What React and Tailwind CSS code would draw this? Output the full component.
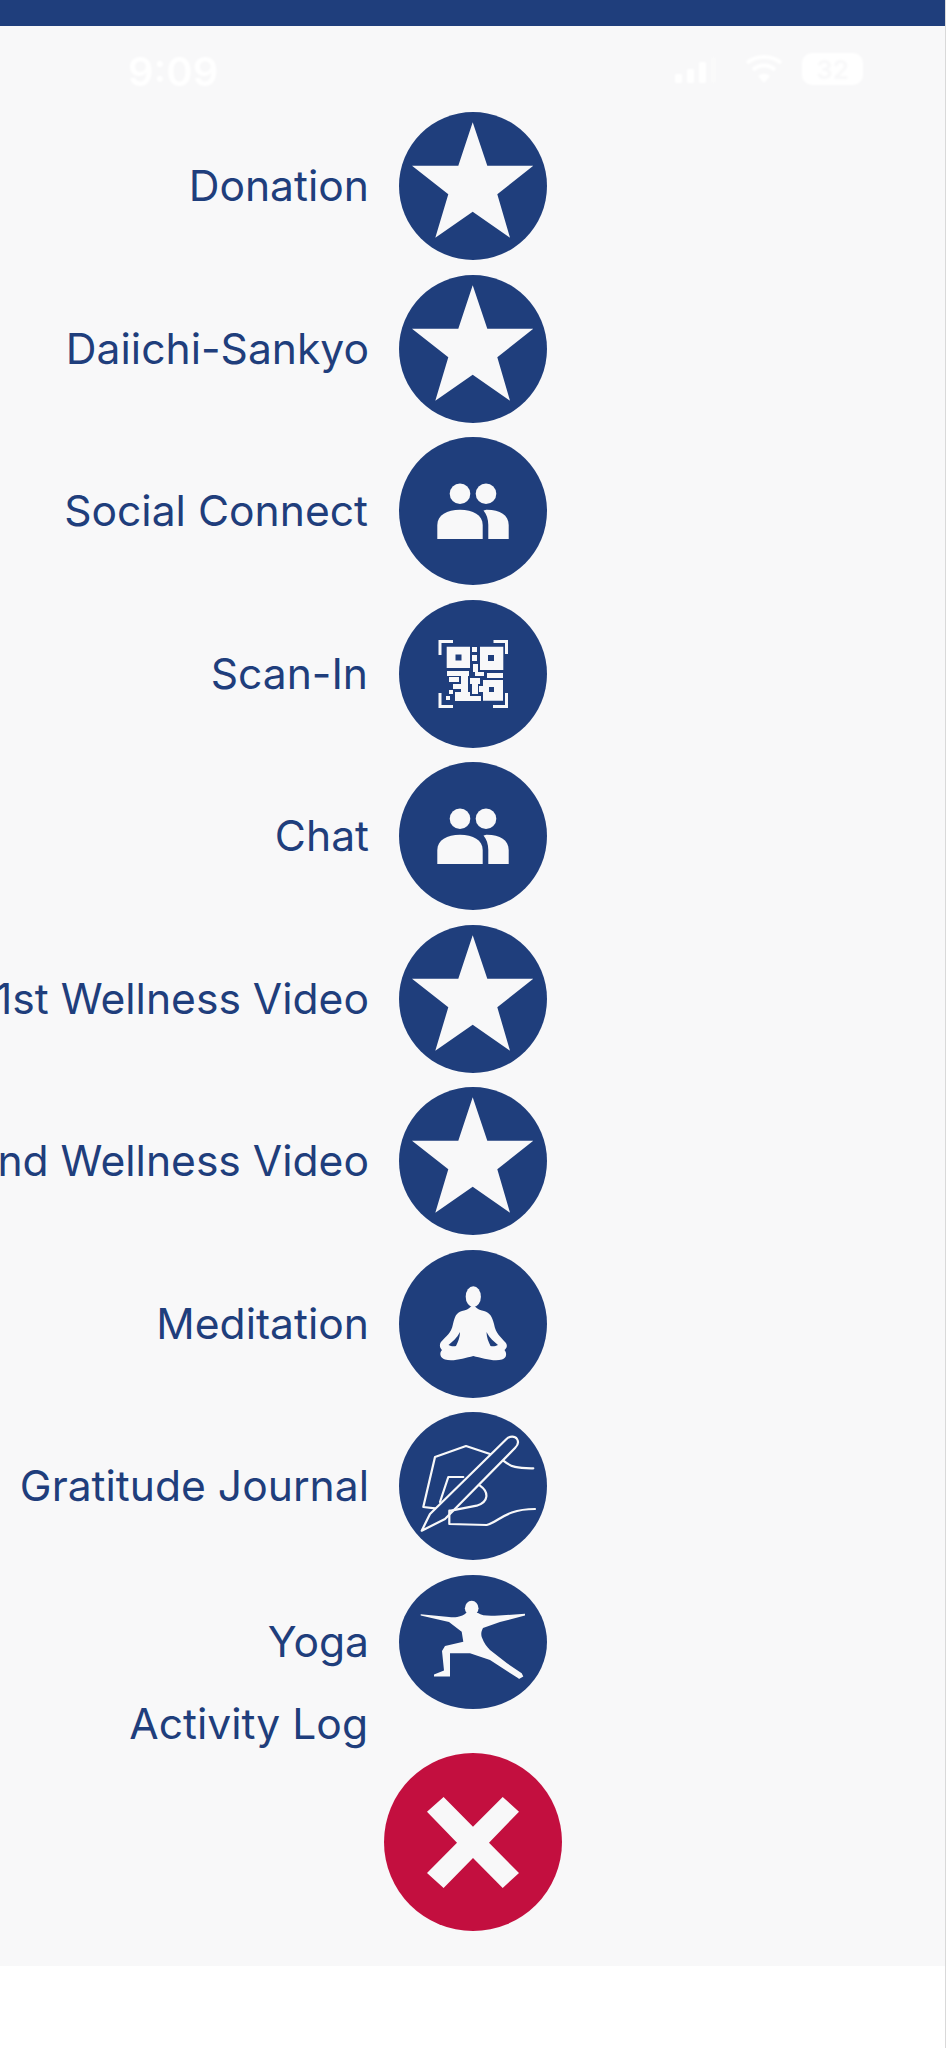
import { useMemo } from "react";

const NAVY = "#1f3e7c";
const PAGE = "#f8f8f9";

function StarIcon() {
    return (
        <polygon
            fill={PAGE}
            points="73.7,10.3 88.3,53.7 134.3,53.7 98.3,82.3 111,125.7 73.7,99.7 36.3,125.7 49.3,82.3 13,53.7 59.3,53.7"
        />
    );
}

function PeopleIcon() {
    return (
        <g fill={PAGE}>
            <circle cx="61" cy="56.7" r="10.3" />
            <circle cx="87" cy="56.7" r="10.3" />
            <path d="M38.3 102V88C38.3 78 48 72.7 61 72.7C74 72.7 83.7 78 83.7 88V102Z" />
            <path d="M89.3 102V88C89.3 82 87.5 77 84.5 73.5C86 73 87 72.7 88 72.7C101 72.7 109.7 78 109.7 88V102Z" />
        </g>
    );
}

function QrIcon() {
    return (
        <g>
            <path
                d="M54 41.5H41V55M94.5 41.5H107.5V54M41 93V106.5H54M94 106.5H107.5V93"
                fill="none"
                stroke={PAGE}
                strokeWidth="3"
            />
            <path
                fill={PAGE}
                fillRule="evenodd"
                d="M47.7 46.7H71V68H47.7ZM56.5 54.5V60.5H62.5V54.5ZM81 46.7H104.3V70H81ZM89 55V61H95V55ZM84 80H104V100.7H84ZM90 87V92H95V87Z"
            />
            <g fill={PAGE}>
                <rect x="73" y="47" width="5" height="5" />
                <rect x="73" y="55" width="5" height="6" />
                <rect x="74" y="64" width="5" height="8" />
                <rect x="48" y="71" width="22" height="5" />
                <rect x="76" y="72" width="9" height="4" />
                <rect x="88" y="73" width="16" height="5" />
                <rect x="50" y="77" width="10" height="5" />
                <rect x="62" y="76" width="7" height="17" />
                <rect x="71" y="78" width="10" height="6" />
                <rect x="54" y="84" width="14" height="5" />
                <rect x="73" y="84" width="6" height="10" />
                <rect x="50" y="90" width="4" height="4" />
                <rect x="47" y="96" width="4" height="4" />
                <rect x="56" y="92" width="15" height="9" />
                <rect x="71" y="96" width="11" height="5" />
                <rect x="80" y="86" width="6" height="6" />
            </g>
        </g>
    );
}

function MeditationIcon() {
    return (
        <g>
            <ellipse cx="74.3" cy="46.7" rx="7.6" ry="10.5" fill={PAGE} />
            <path
                fill={PAGE}
                d="M74 55C70 58 69 60 63 61C57 63 56 66 54 74C52 84 47 86 42 92C40 95 41 98 43 100C40 103 41 108 46 109.5C54 112 66 108 74.3 106C83 108 95 112 103 109.5C108 108 108 103 105.5 100C108 98 109 95 106 92C101 86 97 84 95 74C93 66 91 63 85 61C79 60 78 58 74 55Z"
            />
            <path fill={NAVY} d="M61 82C58 88 53 92 49.5 95C52 96.5 55 96.5 57 96C59 92 61 87 61 82Z" />
            <path fill={NAVY} d="M87.5 82C90.5 88 95.5 92 99 95C96.5 96.5 93.5 96.5 91.5 96C89.5 92 87.5 87 87.5 82Z" />
        </g>
    );
}

function JournalIcon() {
    return (
        <g fill="none" stroke={PAGE} strokeWidth="2.2" strokeLinejoin="round" strokeLinecap="round">
            <path d="M22.7 118.7L31 102L107 27.5C111 23.5 116 24 118 27C120 30 119 33 116 36L46 107Z" />
            <path d="M91 42L67 34L36 45L24.3 95L36 96.3" />
            <path d="M41 90L49.3 65H64.3" />
            <path d="M104.3 48.7C112 55 118 56.5 134.3 56.3" />
            <path d="M81 73.7C90 80 90 90 77.7 93.7L52 98.7H50.3V112L87.7 113C100 110 106 97 136 97" />
        </g>
    );
}

function YogaIcon() {
    return (
        <g fill={PAGE}>
            <ellipse cx="72.7" cy="33.3" rx="6.8" ry="7.5" />
            <path d="M21.7 39.3L50 42C58 43 64 41 67 38L79 38C83 41 90 41 100 40.5L126 38.7L126 40.5L101 47L84 53C82 57 82 59 82.7 62C85 68 88 72 91 75L108 88.3L122.7 98.3L124.3 101.5L120 104L119.3 103.3L91 85L71 78.3H51L51 101.5H35V99.5L45 95.5L43 76L46 71L64.3 66.7L62.7 56.7L50 47L21.7 40.5Z" />
        </g>
    );
}

function Row({ label, nudge, children }) {
    return (
        <div className="flex items-center">
            <div className={`flex w-[399px] justify-end whitespace-nowrap ${nudge ? "pr-[31px]" : "pr-[30px]"}`}>
                <span className="shrink-0 text-[42.6px] leading-[52px]">{label}</span>
            </div>
            <svg viewBox="0 0 148 148" className="h-[148px] w-[148px] shrink-0">
                <circle cx="74" cy="74" r="74" fill={NAVY} />
                {children}
            </svg>
        </div>
    );
}

export default function App() {
    const items = useMemo(
        () => [
            { label: "Donation", icon: <StarIcon /> },
            { label: "Daiichi-Sankyo", icon: <StarIcon /> },
            { label: "Social Connect", icon: <PeopleIcon />, nudge: true },
            { label: "Scan-In", icon: <QrIcon />, nudge: true },
            { label: "Chat", icon: <PeopleIcon /> },
            { label: "1st Wellness Video", icon: <StarIcon /> },
            { label: "2nd Wellness Video", icon: <StarIcon /> },
            { label: "Meditation", icon: <MeditationIcon /> },
            { label: "Gratitude Journal", icon: <JournalIcon /> },
        ],
        []
    );

    return (
        <div className="h-[2048px] w-[946px] overflow-hidden border-r border-[#d9d9d9] bg-white font-['Inter',sans-serif] text-[#1f3e7c]">
            <div className="h-[26px] bg-[#1f3e7c]" />
            <main className="h-[1940px] bg-[#f8f8f9]">
                <div className="flex h-[86px] items-start justify-between pl-[128px] pr-[82px] pt-[24px] text-white blur-[1px]">
                    <span className="text-[40px] font-semibold leading-[44px]">9:09</span>
                    <div className="flex items-center gap-[19px] pt-[3px]">
                        <div className="mr-[10px] flex items-end gap-[5px] self-end pb-[2px]">
                            <div className="h-[9px] w-[7px] rounded-[1px] bg-white" />
                            <div className="h-[14px] w-[7px] rounded-[1px] bg-white" />
                            <div className="h-[21px] w-[7px] rounded-[1px] bg-white" />
                            <div className="h-[26px] w-[5px] rounded-[1px] bg-[#fafafa]" />
                        </div>
                        <svg viewBox="0 0 38 28" className="h-[28px] w-[38px]">
                            <path d="M19 28L13 21C16 18 22 18 25 21Z" fill="white" />
                            <path d="M8 15C14 9 24 9 30 15" fill="none" stroke="white" strokeWidth="4" />
                            <path d="M2 8C11 0 27 0 36 8" fill="none" stroke="white" strokeWidth="4" />
                        </svg>
                        <div className="flex h-[32px] w-[61px] items-center justify-center rounded-[10px] bg-white text-[26px] font-semibold text-[#f8f8f9]">
                            32
                        </div>
                    </div>
                </div>

                <div className="flex flex-col gap-[14.5px]">
                    {items.map((item) => (
                        <Row key={item.label} label={item.label} nudge={item.nudge}>
                            {item.icon}
                        </Row>
                    ))}
                </div>

                <div className="mt-[14.5px] flex items-center">
                    <div className="flex w-[399px] justify-end pr-[30px]">
                        <span className="text-[42.6px] leading-[52px]">Yoga</span>
                    </div>
                    <svg viewBox="0 0 148 134" className="h-[134px] w-[148px] shrink-0">
                        <ellipse cx="74" cy="67" rx="74" ry="67" fill={NAVY} />
                        <YogaIcon />
                    </svg>
                </div>

                <div className="mb-[13px] flex h-[31px] w-[399px] items-center justify-end pr-[31px]">
                    <span className="text-[42.6px] leading-[52px]">Activity Log</span>
                </div>

                <div className="flex w-[946px] pl-[384px]">
                    <svg viewBox="0 0 178 178" className="h-[178px] w-[178px]">
                        <circle cx="89" cy="89" r="89" fill="#c30f3f" />
                        <polygon
                            fill={PAGE}
                            points="59.6,44 89,73.7 118.7,44 135,58.7 105,89.7 135,120 118.7,135 89,105 59.6,135 43,120 73,89.7 43,58.7"
                        />
                    </svg>
                </div>
            </main>
        </div>
    );
}
